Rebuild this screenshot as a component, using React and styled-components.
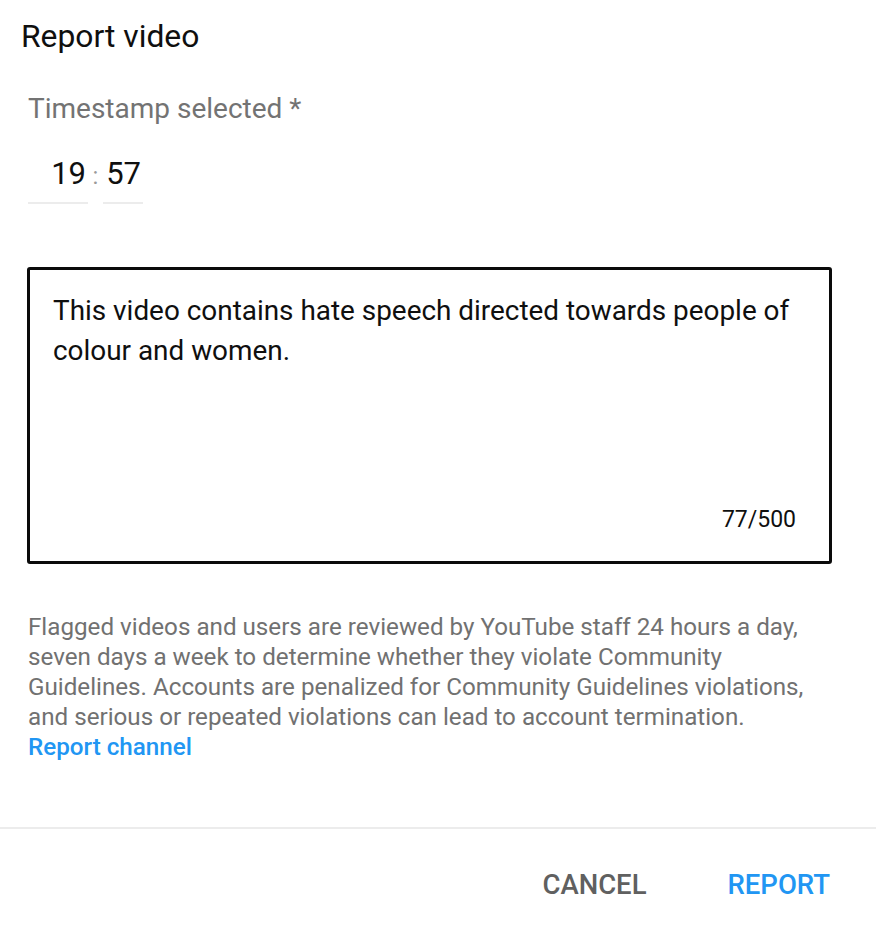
import React from 'react';
import styled, { createGlobalStyle } from 'styled-components';

const GlobalStyle = createGlobalStyle`
    html, body {
        margin: 0;
        padding: 0;
        background: #ffffff;
    }

    body {
        font-family: Roboto, "Noto Sans", "Liberation Sans", sans-serif;
        -webkit-font-smoothing: antialiased;
    }
`;

const Dialog = styled.div`
    width: 876px;
    min-height: 926px;
    background: #fff;
    display: flex;
    flex-direction: column;
`;

const Title = styled.h2`
    margin: 0;
    padding: 18px 21px 0;
    font-size: 31.8px;
    line-height: 36px;
    font-weight: 400;
    color: #0f0f0f;
`;

const Body = styled.div`
    padding: 0 28px;
    display: flex;
    flex-direction: column;
`;

const Label = styled.div`
    margin-top: 39px;
    font-size: 28px;
    line-height: 32px;
    color: #737373;
`;

const TimeRow = styled.div`
    margin-top: 31px;
    display: flex;
    align-items: flex-start;
`;

const TimeInput = styled.input`
    width: ${({ size }) => size}px;
    box-sizing: border-box;
    padding: 0 2px 10px 0;
    border: none;
    border-bottom: 2px solid #ececec;
    outline: none;
    background: transparent;
    font-family: inherit;
    font-size: 31px;
    line-height: 36px;
    color: #0f0f0f;
    text-align: right;
`;

const Colon = styled.span`
    width: 15px;
    text-align: center;
    font-size: 24px;
    line-height: 36px;
    padding-top: 2px;
    color: #9a9a9a;
`;

const Box = styled.div`
    margin: 63px 0 0 -1px;
    width: 805px;
    height: 297px;
    box-sizing: border-box;
    border: 3px solid #0a0a0a;
    border-radius: 3px;
    padding: 21px 33px 27px 23px;
    display: flex;
    flex-direction: column;
`;

const TextArea = styled.textarea`
    flex: 1;
    margin: 0;
    padding: 0;
    border: none;
    outline: none;
    resize: none;
    overflow: hidden;
    font-family: inherit;
    font-size: 27.9px;
    line-height: 40px;
    color: #0f0f0f;
    background: transparent;
`;

const Counter = styled.div`
    align-self: flex-end;
    font-size: 23px;
    line-height: 28px;
    color: #0f0f0f;
`;

const Help = styled.p`
    margin: 48px 0 0;
    width: 800px;
    font-size: 24.2px;
    line-height: 30px;
    color: #717171;
`;

const Link = styled.a`
    display: block;
    color: #2196f3;
    font-weight: 500;
    text-decoration: none;
`;

const Divider = styled.hr`
    margin: 65px 0 0;
    border: none;
    height: 2px;
    background: #ececec;
`;

const Actions = styled.div`
    display: flex;
    justify-content: flex-end;
    gap: 81px;
    padding: 40px 46px 0 0;
`;

const Button = styled.button`
    border: none;
    background: transparent;
    padding: 0;
    cursor: pointer;
    font-family: inherit;
    font-size: 27.5px;
    line-height: 32px;
    font-weight: 500;
    color: ${({ primary }) => (primary ? '#2196f3' : '#606060')};
`;

const message = 'This video contains hate speech directed towards people of colour and women.';

const App = () => (
    <Dialog>
        <GlobalStyle />
        <Title>Report video</Title>
        <Body>
            <Label>Timestamp selected *</Label>
            <TimeRow>
                <TimeInput size={60} defaultValue="19" />
                <Colon>:</Colon>
                <TimeInput size={40} defaultValue="57" />
            </TimeRow>
            <Box>
                <TextArea defaultValue={message} />
                <Counter>77/500</Counter>
            </Box>
            <Help>
                Flagged videos and users are reviewed by YouTube staff 24 hours a day,
                seven days a week to determine whether they violate Community
                Guidelines. Accounts are penalized for Community Guidelines violations,
                and serious or repeated violations can lead to account termination.
                <Link href="#">Report channel</Link>
            </Help>
        </Body>
        <Divider />
        <Actions>
            <Button>CANCEL</Button>
            <Button primary>REPORT</Button>
        </Actions>
    </Dialog>
);

export default App;
